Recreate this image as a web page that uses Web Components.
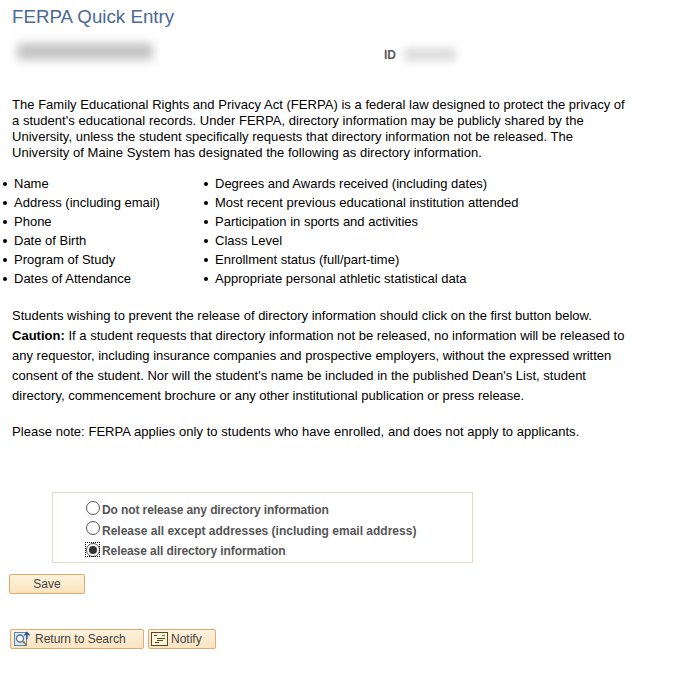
<!DOCTYPE html>
<html><head><meta charset="utf-8"><style>
html,body{margin:0;padding:0;background:#fff}
body{font-family:"Liberation Sans",Arial,sans-serif;font-size:13px;color:#000}
</style></head><body>
<ferpa-page>
<page-title slot="title">FERPA Quick Entry</page-title>
<id-row slot="id"></id-row>
<intro-text slot="intro">The Family Educational Rights and Privacy Act (FERPA) is a federal law designed to protect the privacy of<br>a student's educational records. Under FERPA, directory information may be publicly shared by the<br>University, unless the student specifically requests that directory information not be released. The<br>University of Maine System has designated the following as directory information.</intro-text>
<bullet-cols slot="lists"></bullet-cols>
<note-text slot="note">Students wishing to prevent the release of directory information should click on the first button below.<br><b>Caution:</b> If a student requests that directory information not be released, no information will be released to<br>any requestor, including insurance companies and prospective employers, without the expressed written<br>consent of the student. Nor will the student's name be included in the published Dean's List, student<br>directory, commencement brochure or any other institutional publication or press release.</note-text>
<note-text slot="please" style="letter-spacing:.04px">Please note: FERPA applies only to students who have enrolled, and does not apply to applicants.</note-text>
<radio-box slot="radios"></radio-box>
<ps-button slot="save" style="width:76px;margin-left:9px;justify-content:center;padding:0">Save</ps-button>
<nav-row slot="nav">
<ps-button style="width:134px;gap:2px"><svg slot="icon" width="20" height="18" viewBox="0 0 20 18"><rect x="1.500" y="2.500" width="12" height="13" fill="#dbe7f7" stroke="#5b86c4"/><circle cx="7" cy="8.500" r="3.500" fill="#fff" stroke="#55708f" stroke-width="1.300"/><path d="M9.500 11l4 4" stroke="#a08a3a" stroke-width="2"/><path d="M14 9V3.500M11.500 5.500L14 2.500l2.500 3" fill="none" stroke="#33508a" stroke-width="1.300"/></svg>Return to Search</ps-button>
<ps-button style="width:68px"><svg slot="icon" width="17" height="14" viewBox="0 0 17 14"><rect x="0.500" y="0.500" width="16" height="13" fill="#fdf6dc" stroke="#5a4720"/><path d="M3 3.500h3M6 6.500h8M6 8.500h6M4 10.500h4" stroke="#5a4720"/><path d="M11 3.500h3" stroke="#5aa03c" stroke-width="1.400"/></svg>Notify</ps-button>
</nav-row>
</ferpa-page>
<script>
function def(name, html, init){
  customElements.define(name, class extends HTMLElement{
    connectedCallback(){
      if(this.shadowRoot) return;
      this.attachShadow({mode:'open'}).innerHTML = html;
      if(init) init(this.shadowRoot, this);
    }
  });
}
def('ferpa-page', `<style>
:host{display:flex;flex-direction:column;width:678px;height:683px;overflow:hidden}
.t{padding:6px 0 0 12px;height:32px;flex:none}
.i{padding-top:1px;height:58px;flex:none}
.p{padding:0 0 0 12px}
</style>
<div class="t"><slot name="title"></slot></div>
<div class="i"><slot name="id"></slot></div>
<div class="p"><slot name="intro"></slot></div>
<slot name="lists"></slot>
<div class="p"><slot name="note"></slot></div>
<div class="p" style="padding-top:16px"><slot name="please"></slot></div>
<slot name="radios"></slot>
<slot name="save"></slot>
<slot name="nav"></slot>`);
def('page-title', `<style>:host{display:block;font-size:18.75px;line-height:21px;color:#4a6a93}</style><slot></slot>`);
def('id-row', `<style>
:host{display:flex;align-items:flex-start}
.a{width:136px;height:17px;margin:4px 0 0 17px;background:#c4c4c4;filter:blur(5px);border-radius:3px;flex:none}
.l{margin:9px 0 0 231px;font-size:12px;font-weight:bold;color:#5b5b5b;line-height:14px}
.b{width:52px;height:13px;margin:9px 0 0 8px;background:#dcdcdc;filter:blur(4px);flex:none}
</style><div class="a"></div><div class="l">ID</div><div class="b"></div>`);
def('intro-text', `<style>:host{display:block;line-height:16px;letter-spacing:.03px}</style><slot></slot>`);
def('note-text', `<style>:host{display:block;line-height:20px;letter-spacing:.01px}</style><slot></slot>`);
const left=['Name','Address (including email)','Phone','Date of Birth','Program of Study','Dates of Attendance'];
const right=['Degrees and Awards received (including dates)','Most recent previous educational institution attended','Participation in sports and activities','Class Level','Enrollment status (full/part-time)','Appropriate personal athletic statistical data'];
const li=a=>a.map(x=>`<li>${x}</li>`).join('');
def('bullet-cols', `<style>
:host{display:grid;grid-template-columns:201px 1fr;padding:13px 0 18px 0}
ul{margin:0;padding:0;list-style:none}
li{line-height:19px;height:19px;padding-left:14px;position:relative}
li::before{content:"";position:absolute;left:3px;top:8px;width:4px;height:4px;border-radius:50%;background:#000}
</style><ul>${li(left)}</ul><ul>${li(right)}</ul>`);
def('radio-box', `<style>
:host{display:block;width:419px;height:69px;margin:50px 0 11px 52px;border:1px solid #e3d9c6;font-size:12px}
.r{display:flex;align-items:center;height:21px;padding-left:33px;font-weight:bold;color:#555;line-height:14px}
.c{width:14px;height:14px;box-sizing:border-box;border:1px solid #555;border-radius:50%;background:#fff;margin-right:2px;position:relative;top:-2px;flex:none}
.up{top:-3px}
.on{top:-1px}
.on::before{content:"";position:absolute;left:-2px;top:-2px;right:-1px;bottom:-1px;border:1px dotted #000}
.on::after{content:"";position:absolute;left:2px;top:2px;width:8px;height:8px;border-radius:50%;background:#333}
</style><div style="height:6px"></div>
<div class="r" style="letter-spacing:-.1px"><span class="c"></span>Do not release any directory information</div>
<div class="r" style="letter-spacing:.005px"><span class="c up"></span>Release all except addresses (including email address)</div>
<div class="r" style="height:20px;letter-spacing:-.08px"><span class="c on"></span>Release all directory information</div>`);
def('ps-button', `<style>
:host{display:flex;align-items:center;gap:3px;padding-left:2px;box-sizing:border-box;height:20px;border:1px solid #e3aa6d;border-radius:2px;background:linear-gradient(#fdf3dc,#fbe3c0);color:#444;font-size:12px}
</style><slot name="icon"></slot><span><slot></slot></span>`);
def('nav-row', `<style>:host{display:flex;gap:4px;margin:35px 0 0 10px}</style><slot></slot>`);
</script>
</body></html>
